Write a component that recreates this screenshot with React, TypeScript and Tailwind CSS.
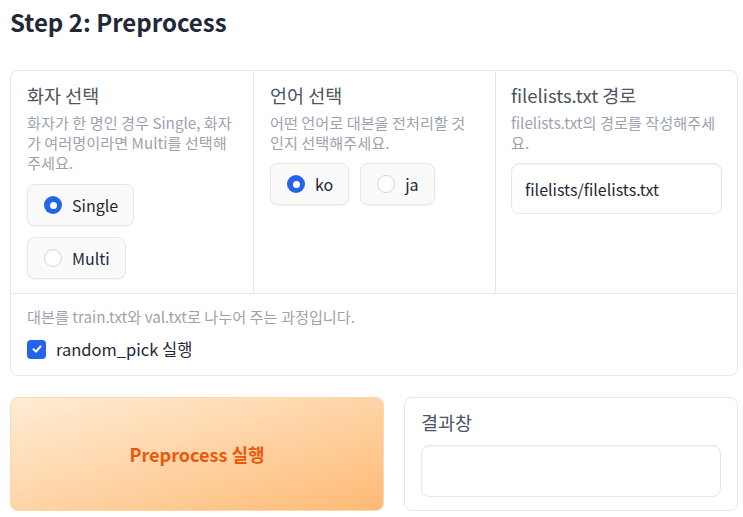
import React from "react";

function Radio({ label, checked }: { label: string; checked?: boolean }) {
  return (
    <div className="flex h-[42px] items-center gap-[10px] rounded-[8px] border border-[#e5e7eb] bg-[#fafafa] pl-[16px] pr-[15px] shadow-[0_1px_2px_rgba(0,0,0,0.05)]">
      {checked ? (
        <span className="flex h-[18px] w-[18px] items-center justify-center rounded-full bg-[#2563eb]">
          <span className="h-[7px] w-[7px] rounded-full bg-white" />
        </span>
      ) : (
        <span className="h-[18px] w-[18px] rounded-full border border-[#d1d5db] bg-white" />
      )}
      <span className="text-[16px] leading-[24px] text-[#1f2937]">{label}</span>
    </div>
  );
}

export default function App() {
  return (
    <div className="min-h-[517px] bg-white px-[10px] pt-[6px] font-['Noto_Sans_CJK_KR','Noto_Sans',sans-serif]">
      <h2 className="text-[24px] font-bold leading-[32px] text-[#1f2937]">Step 2: Preprocess</h2>

      <div className="mt-[32px] w-[728px] overflow-hidden rounded-[8px] border border-[#e5e7eb] bg-white">
        <div className="grid grid-cols-3 border-b border-[#e5e7eb]">
          <div className="flex flex-col px-[16px] pt-[12px] pb-[14px]">
            <div className="text-[18.5px] leading-[24px] text-[#4b5563]">화자 선택</div>
            <div className="mt-[5px] text-[15.2px] leading-[20px] text-[#9ca3af]">
              화자가 한 명인 경우 Single, 화자<br />가 여러명이라면 Multi를 선택해<br />주세요.
            </div>
            <div className="mt-[12px] flex flex-col items-start gap-[11px]">
              <Radio label="Single" checked />
              <Radio label="Multi" />
            </div>
          </div>
          <div className="flex flex-col border-l border-[#e5e7eb] px-[16px] pt-[12px] pb-[14px]">
            <div className="text-[18.5px] leading-[24px] text-[#4b5563]">언어 선택</div>
            <div className="mt-[5px] text-[15.2px] leading-[20px] text-[#9ca3af]">
              어떤 언어로 대본을 전처리할 것<br />인지 선택해주세요.
            </div>
            <div className="mt-[11px] flex items-start gap-[11px]">
              <Radio label="ko" checked />
              <Radio label="ja" />
            </div>
          </div>
          <div className="flex flex-col border-l border-[#e5e7eb] px-[15px] pt-[12px] pb-[14px]">
            <div className="text-[18.5px] leading-[24px] text-[#4b5563]">filelists.txt 경로</div>
            <div className="mt-[5px] text-[15.2px] leading-[20px] text-[#9ca3af]">
              filelists.txt의 경로를 작성해주세<br />요.
            </div>
            <div className="mt-[11px] flex h-[51px] items-center rounded-[8px] border border-[#e5e7eb] bg-white px-[13px] shadow-[inset_0_1px_2px_rgba(0,0,0,0.05)]">
              <span className="text-[16px] leading-[24px] text-[#1f2937]">filelists/filelists.txt</span>
            </div>
          </div>
        </div>
        <div className="px-[16px] pt-[12px] pb-[14px]">
          <div className="text-[15.2px] leading-[20px] text-[#9ca3af]">대본를 train.txt와 val.txt로 나누어 주는 과정입니다.</div>
          <div className="mt-[11px] flex h-[24px] items-center gap-[10px]">
            <span className="flex h-[19px] w-[19px] items-center justify-center rounded-[4px] bg-[#2563eb]">
              <svg width="12" height="12" viewBox="0 0 12 12" fill="none">
                <path d="M2.5 6.2 L5 8.5 L9.5 3.5" stroke="white" strokeWidth="2" strokeLinecap="round" strokeLinejoin="round" />
              </svg>
            </span>
            <span className="text-[16.5px] leading-[24px] text-[#1f2937]">random_pick 실행</span>
          </div>
        </div>
      </div>

      <div className="mt-[21px] flex w-[728px] gap-[20px]">
        <button className="flex h-[114px] w-[374px] items-center justify-center rounded-[8px] border border-[#fed7aa] bg-gradient-to-br from-[#ffedd5] to-[#fdba74] text-[18px] font-bold leading-[24px] text-[#ea580c]">
          Preprocess 실행
        </button>
        <div className="flex h-[114px] flex-1 flex-col rounded-[8px] border border-[#e5e7eb] bg-white px-[16px] pt-[12px] pb-[13px]">
          <div className="text-[18.5px] leading-[24px] text-[#4b5563]">결과창</div>
          <div className="mt-[11px] h-[52px] rounded-[8px] border border-[#e5e7eb] bg-white shadow-[inset_0_1px_2px_rgba(0,0,0,0.05)]" />
        </div>
      </div>
    </div>
  );
}
